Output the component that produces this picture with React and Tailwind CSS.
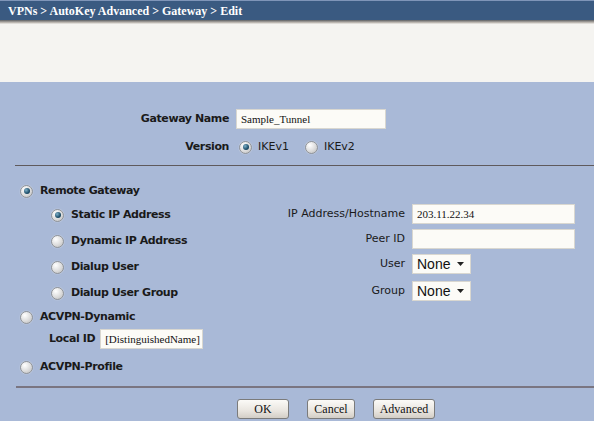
import React from "react";

const label = "font-['DejaVu_Sans',Verdana,sans-serif] text-[11px] text-[#1a1a1a]";
const bold = "font-bold tracking-[-0.4px]";
const serif = "font-['Liberation_Serif','Times_New_Roman',serif]";

function Radio({ checked }) {
  return (
    <span className="relative inline-flex h-[13px] w-[13px] shrink-0 items-center justify-center rounded-full border border-[#8f9399] bg-[radial-gradient(circle_at_35%_30%,#ffffff,#dcdcdc_55%,#b8b8b8)] shadow-[0_0_1px_#fff]">
      {checked && (
        <span className="h-[6px] w-[6px] rounded-full bg-[radial-gradient(circle_at_35%_35%,#7fb0c8,#1d4f6b_60%,#0f2f44)]" />
      )}
    </span>
  );
}

function RadioRow({ checked, text, className = "" }) {
  return (
    <div className={`flex h-[20px] items-center gap-[7px] ${className}`}>
      <Radio checked={checked} />
      <span className={`${label} ${bold}`}>{text}</span>
    </div>
  );
}

function TextInput({ value, className = "" }) {
  return (
    <div
      className={`flex h-[20px] items-center border border-[#d9d7d0] bg-[#fcfbf7] px-[4px] text-[11px] text-[#111] ${serif} ${className}`}
    >
      {value}
    </div>
  );
}

function SelectBox() {
  return (
    <div className="flex h-[20px] w-[59px] items-center justify-between border border-[#d9d7d0] bg-[#fcfbf7] pl-[4px] pr-[6px]">
      <span className="font-['Liberation_Sans',Arial,sans-serif] text-[14px] leading-none text-[#111]">None</span>
      <svg width="7" height="4" viewBox="0 0 7 4">
        <path d="M0 0h7L3.5 4z" fill="#222" />
      </svg>
    </div>
  );
}

function Button({ children, width }) {
  return (
    <button
      className={`flex h-[20px] items-center justify-center rounded-[3px] border border-[#7b7b7b] bg-[linear-gradient(#fbfaf7,#e9e5df_60%,#d3cec6)] text-[12px] text-[#111] ${serif} ${width}`}
    >
      {children}
    </button>
  );
}

export default function App() {
  return (
    <div className="flex h-[421px] w-[594px] flex-col overflow-hidden bg-[#a9b9d7]">
      <div className="flex h-[20px] items-center border-t border-[#7f95b8] bg-[#3a5a81] pl-[8px]">
        <span className={`${serif} text-[12px] font-bold text-white`}>
          VPNs &gt; AutoKey Advanced &gt; Gateway &gt; Edit
        </span>
      </div>
      <div className="h-[4px] bg-[linear-gradient(#5d5f62,#b8b3ad_60%,#f1efeb)]" />
      <div className="h-[58px] bg-[#f5f4f1]" />

      <div className="flex flex-col pt-[27px]">
        <div className="flex items-center">
          <div className={`${label} ${bold} w-[236px] pr-[7px] text-right`}>Gateway Name</div>
          <TextInput value="Sample_Tunnel" className="w-[150px]" />
        </div>
        <div className="mt-[8px] flex h-[20px] items-center">
          <div className={`${label} ${bold} w-[236px] pr-[7px] text-right`}>Version</div>
          <div className="flex items-center gap-[6px] pl-[3px]">
            <Radio checked />
            <span className={label}>IKEv1</span>
            <span className="ml-[4px]" />
            <Radio />
            <span className={label}>IKEv2</span>
          </div>
        </div>
        <div className="ml-[15px] mt-[8px] h-px bg-[#5f5a5c]" />

        <div className="flex">
          <div className="flex w-[250px] flex-col pl-[20px]">
            <RadioRow checked text="Remote Gateway" className="mt-[15px]" />
            <div className="flex flex-col pl-[31px]">
              <RadioRow checked text="Static IP Address" className="mt-[4px]" />
              <RadioRow text="Dynamic IP Address" className="mt-[6px]" />
              <RadioRow text="Dialup User" className="mt-[6px]" />
              <RadioRow text="Dialup User Group" className="mt-[6px]" />
            </div>
            <RadioRow text="ACVPN-Dynamic" className="mt-[4px]" />
            <div className="mt-[2px] flex items-center gap-[5px] pl-[29px]">
              <span className={`${label} ${bold}`}>Local ID</span>
              <TextInput value="[DistinguishedName]" className="w-[103px]" />
            </div>
            <RadioRow text="ACVPN-Profile" className="mt-[8px]" />
          </div>

          <div className="flex flex-col pt-[38px]">
            <div className="flex items-center">
              <div className={`${label} w-[162px] pr-[7px] text-right`}>IP Address/Hostname</div>
              <TextInput value="203.11.22.34" className="w-[163px]" />
            </div>
            <div className="mt-[5px] flex items-center">
              <div className={`${label} w-[162px] pr-[7px] text-right`}>Peer ID</div>
              <TextInput value="" className="w-[163px]" />
            </div>
            <div className="mt-[5px] flex items-center">
              <div className={`${label} w-[162px] pr-[7px] text-right`}>User</div>
              <SelectBox />
            </div>
            <div className="mt-[7px] flex items-center">
              <div className={`${label} w-[162px] pr-[7px] text-right`}>Group</div>
              <SelectBox />
            </div>
          </div>
        </div>

        <div className="ml-[16px] mt-[9px] h-[2px] bg-[#7a7581]" />

        <div className="mt-[11px] flex gap-[18px] pl-[237px]">
          <Button width="w-[52px]">OK</Button>
          <Button width="w-[48px]">Cancel</Button>
          <Button width="w-[62px]">Advanced</Button>
        </div>
      </div>
    </div>
  );
}
